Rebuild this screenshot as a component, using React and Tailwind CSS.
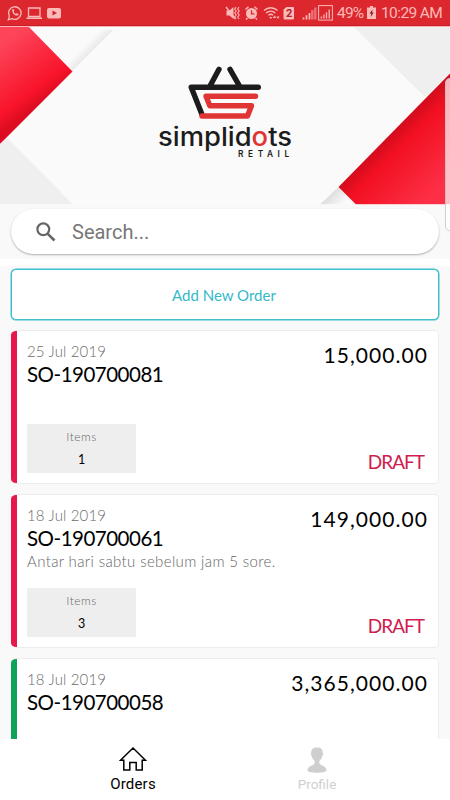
import React, { useState } from 'react';

const orders = [
  { id: 'SO-190700081', date: '25 Jul 2019', total: '15,000.00', note: '', items: 1, status: 'DRAFT' },
  { id: 'SO-190700061', date: '18 Jul 2019', total: '149,000.00', note: 'Antar hari sabtu sebelum jam 5 sore.', items: 3, status: 'DRAFT' },
  { id: 'SO-190700058', date: '18 Jul 2019', total: '3,365,000.00', note: '' },
];

// Android status bar
function StatusBar() {
  return (
    <div className="relative z-10 flex h-[26px] shrink-0 items-center justify-between border-b border-[#c01f2b] bg-[#dc272e] pr-[10px] pl-[7px] font-[Roboto] font-normal text-[#fbb9b7]">
      <svg width="56" height="18" viewBox="0 0 56 18" fill="none" stroke="currentColor">
        <path d="M1.3 15.7l1-3.6A6.3 6.3 0 1 1 5 14.7z" strokeWidth="1.3" />
        <path d="M5.3 5.4c.5-.7 1.2-.6 1.5.1l.4 1c.1.5-.6.9-.6 1.2.5 1.1 1.3 1.8 2.3 2.2.4 0 .8-.9 1.2-.7l1.3.7c.4.3-.1 1.3-.8 1.6-2.5.7-6-2.8-5.3-6.1z" fill="currentColor" stroke="none" />
        <path d="M21.5 4h11.5v8.5h-11.5z" strokeWidth="1.3" />
        <path d="M19.5 14.2h15.5" strokeWidth="1.6" />
        <rect x="40" y="4" width="14" height="10.5" rx="2" fill="currentColor" stroke="none" />
        <path d="M45.5 6.6l4.5 2.5-4.5 2.5z" fill="#c9252d" stroke="none" />
      </svg>
      <div className="flex items-center">
        <svg width="108" height="20" viewBox="0 0 108 20" fill="none" stroke="currentColor" className="mr-[4px]">
          {/* muted speaker */}
          <path d="M1.5 7.5h3l4-3.5v12l-4-3.5h-3z" fill="currentColor" stroke="none" />
          <path d="M1 4l9.5 12" strokeWidth="1.4" />
          <path d="M11 4l-1.3 2 1.5 2-1.5 2 1.5 2-1.5 2 1.3 2M14 4l-1.3 2 1.5 2-1.5 2 1.5 2-1.5 2 1.3 2" strokeWidth="1.1" />
          {/* alarm */}
          <circle cx="26.5" cy="10.5" r="5.5" fill="currentColor" stroke="none" />
          <path d="M20.5 6.5l3-2.7M32.5 6.5l-3-2.7M22.5 15l-1.5 1.5M30.5 15l1.5 1.5" strokeWidth="1.4" />
          <path d="M26.5 7.3v3.5h2.8" stroke="#dc272e" strokeWidth="1.2" />
          {/* wifi */}
          <path d="M39 7.5c4-3.7 9.5-3.7 13.5 0M41.2 10c2.7-2.5 6.4-2.5 9.1 0M43.5 12.3c1.3-1.2 3.2-1.2 4.5 0" strokeWidth="1.4" />
          <path d="M44.2 14h3.2l-1.6 2zM47.8 15l1.8-2.6 1.8 2.6zM51.5 13.5h3l-1.5 2.5z" fill="currentColor" stroke="none" />
          {/* sim slot */}
          <path d="M61.5 4h6.5q1 0 1 1v10.5q0 1-1 1h-8.500q-1 0-1-1v-9z" fill="currentColor" stroke="none" />
          <text x="64.2" y="14.2" textAnchor="middle" fontSize="11" fontWeight="700" fontFamily="Roboto, sans-serif" fill="#b5222a" stroke="none">2</text>
          {/* signals */}
          <path d="M78.5 16.5v-2M81.5 16.5v-4.2M84.5 16.5v-6.500" strokeWidth="1.7" />
          <path d="M87.3 16.5v-9.5M90.3 16.5v-12" strokeWidth="2.4" opacity=".5" />
          <rect x="93.6" y="2.6" width="13.8" height="14.5" strokeWidth="1" />
          <path d="M96.3 15.5v-2M98.9 15.5v-4M101.5 15.5v-6.3M104.2 15.5v-9" strokeWidth="1.3" />
        </svg>
        <span className="relative top-px w-[26px] text-[15.5px] leading-none tracking-[-0.8px] whitespace-nowrap">49%</span>
        <svg width="9" height="13" viewBox="0 0 9 13" className="mr-[5px] ml-[4px]">
          <path d="M3 0h3v1.5h3v11.5h-9v-11.5h3z" fill="currentColor" />
          <path d="M5.5 3.5L2.5 7.5h1.700l-.5 3.5 3-4.500h-1.600z" fill="#8d1d24" />
        </svg>
        <span className="relative top-px w-[59px] text-[15.5px] leading-none tracking-[-0.6px] whitespace-nowrap">10:29 AM</span>
      </div>
    </div>
  );
}

// Brand banner: folded paper corners and the logo
function Banner() {
  return (
    <svg width="450" height="179" viewBox="0 0 450 179" className="block shrink-0">
      <defs>
        <linearGradient id="redLeft" gradientUnits="userSpaceOnUse" x1="0" y1="20" x2="42" y2="76">
          <stop offset="0" stopColor="#fd4459" />
          <stop offset=".8" stopColor="#f8142b" />
          <stop offset="1" stopColor="#dd0c20" />
        </linearGradient>
        <linearGradient id="redRight" gradientUnits="userSpaceOnUse" x1="390" y1="106" x2="442" y2="158">
          <stop offset="0" stopColor="#cf0c1c" />
          <stop offset=".25" stopColor="#f21022" />
          <stop offset="1" stopColor="#fd2f46" />
        </linearGradient>
        <linearGradient id="foldTop" gradientUnits="userSpaceOnUse" x1="94" y1="24" x2="87" y2="17">
          <stop offset="0" stopColor="#e8e8e8" />
          <stop offset="1" stopColor="#fafafa" />
        </linearGradient>
        <linearGradient id="foldBottom" gradientUnits="userSpaceOnUse" x1="330" y1="169" x2="341" y2="180">
          <stop offset="0" stopColor="#dedede" />
          <stop offset="1" stopColor="#fafafa" />
        </linearGradient>
      </defs>
      <rect width="450" height="179" fill="#fafafa" />
      <path d="M72 45L113 4L28 0z" fill="url(#foldTop)" />
      <path d="M0 0H28L72.5 45.5L0 118z" fill="url(#redLeft)" />
      <path d="M0 118L7 112L73 178.5H0z" fill="#efefef" />
      <path d="M353 0H450V47L425 71z" fill="#efefef" />
      <path d="M338.5 161L320 178.5H356z" fill="url(#foldBottom)" />
      <path d="M450 47.5L338.5 161L356 178.5H450z" fill="url(#redRight)" />
      <rect y="0" width="450" height="1" fill="#ffb3b6" />
      <rect y="178" width="450" height="1" fill="#fafafa" opacity=".6" />
      {/* basket */}
      <g fill="none" strokeWidth="5.4" strokeLinecap="round" strokeLinejoin="round">
        <path d="M219 43.300L210 60M230 43.300L239.5 60M258.3 61.300H191.2L202 88.5" stroke="#1d1c1c" />
        <path d="M255.5 70.300H206L209.8 79.800H251.5L247.5 90H202" stroke="#df3635" />
      </g>
      <text x="158" y="120" textLength="134" lengthAdjust="spacingAndGlyphs" fontFamily="Inter, sans-serif" fontSize="26" fontWeight="500" fill="#1d1c1c">
        simplid<tspan fill="#df3635">o</tspan>ts
      </text>
      <text x="238" y="130.5" fontFamily="Inter, sans-serif" fontSize="8.3" fontWeight="600" letterSpacing="4.6" fill="#1d1c1c">RETAIL</text>
    </svg>
  );
}

function OrderCard({ order }) {
  return (
    <div className="flex h-[154px] shrink-0 overflow-hidden rounded-[5px] border border-l-0 border-[#ececec] bg-white">
      <div className={`-my-px w-[6px] shrink-0 ${order.status === 'DRAFT' ? 'bg-[#e5174b]' : 'bg-[#0fa35a]'}`} />
      <div className="flex flex-1 flex-col pt-[11px] pr-[10px] pb-[10px] pl-[10px]">
        <div className="flex h-[83px] justify-between">
          <div className="whitespace-nowrap">
            <div className="text-[15px] leading-[19px] font-light tracking-[0.15px] text-[#6c6c6c]">{order.date}</div>
            <div className="text-[20.5px] leading-[26px] tracking-[-0.5px] text-black">{order.id}</div>
            <div className="text-[15px] leading-[21px] font-light tracking-[0.37px] text-[#666]">{order.note}</div>
          </div>
          <div className="pt-px text-[21px] leading-[24px] tracking-[1.05px] text-black">{order.total}</div>
        </div>
        {order.status && (
          <div className="flex justify-between">
            <div className="flex h-[49px] w-[109px] flex-col items-center bg-[#eeeeee] pt-[4px]">
              <span className="text-[12px] leading-[18px] font-light tracking-[0.5px] text-[#666]">Items</span>
              <span className="mt-[6px] text-[12.5px] leading-[16px] text-black">{order.items}</span>
            </div>
            <div className="self-end pr-[4px] text-[19px] leading-[23px] tracking-[-1px] text-[#d01c50]">{order.status}</div>
          </div>
        )}
      </div>
    </div>
  );
}

export default function App() {
  const [search, setSearch] = useState('');

  return (
    <div className="relative flex h-[800px] w-[450px] flex-col overflow-hidden bg-[#f9f9f9] font-[Lato,sans-serif] font-normal">
      <StatusBar />
      <Banner />

      <div className="shrink-0 px-[11px] pt-[4px] pb-[5px]">
        <div className="flex h-[45px] items-center rounded-full bg-white pl-[25px] shadow-[0_1px_2px_rgba(0,0,0,0.3)]">
          <svg width="20" height="20" viewBox="0 0 20 20" fill="none" stroke="#666" strokeWidth="2.2">
            <circle cx="7.3" cy="7.3" r="5.9" />
            <path d="M11.8 11.8L18.5 18.5" strokeWidth="2.6" />
          </svg>
          <input
            type="text"
            placeholder="Search..."
            value={search}
            onChange={(e) => setSearch(e.target.value)}
            className="mt-px ml-[16px] w-[300px] font-[Roboto] text-[20px] font-normal outline-none placeholder:text-[#777]"
          />
        </div>
      </div>
      <div className="h-[7px] shrink-0 bg-white" />

      <div className="flex min-h-0 flex-1 flex-col gap-[10px] overflow-hidden pt-[3px] pr-[11px] pl-[11px]">
        <button className="h-[51px] shrink-0 rounded-[5px] border-[1.5px] border-[#3fbfcd] bg-white pt-px pr-[2px] text-[15px] text-[#35b9c9] shadow-[0_0_0_0.5px_#3fbfcd]">
          Add New Order
        </button>
        {orders.map((order) => (
          <OrderCard key={order.id} order={order} />
        ))}
      </div>

      {/* Bottom navigation */}
      <div className="flex h-[61px] shrink-0 justify-center gap-[76px] bg-white font-[Roboto]">
        <div className="flex w-[108px] flex-col items-center pt-[7px] text-black">
          <svg width="28" height="26" viewBox="0 0 28 26" fill="none" stroke="currentColor" strokeWidth="1.5">
            <path d="M1.5 14.3L14 2L26.5 14.3H23.2V24H17.2V16.5H10.8V24H4.8V14.3z" />
          </svg>
          <span className="mt-[2px] text-[15px] leading-[20px] tracking-[0.2px]">Orders</span>
        </div>
        <div className="flex w-[108px] flex-col items-center pt-[8px] text-[#cfcfcf]">
          <svg width="20" height="26" viewBox="0 0 20 26" fill="currentColor">
            <path d="M10 .5c4 0 5.800 2 5.800 5 .6 1 .4 2.700-.5 3.500-.4 2.300-1.600 4-3 5v2c0 2.500 7.200 2.500 7.200 7.500 0 3-19 3-19 0 0-5 7.200-5 7.200-7.500v-2c-1.400-1-2.600-2.700-3-5-.9-.8-1.100-2.500-.5-3.500 0-3 1.800-5 5.800-5z" />
          </svg>
          <span className="mt-[2px] text-[13.5px] leading-[18px]">Profile</span>
        </div>
      </div>

      {/* edge panel handle */}
      <div className="absolute top-[78px] right-0 z-10 h-[153px] w-[5px] rounded-l-[5px] border border-r-0 border-[#bdbdbd]/70 bg-white/70" />
    </div>
  );
}
